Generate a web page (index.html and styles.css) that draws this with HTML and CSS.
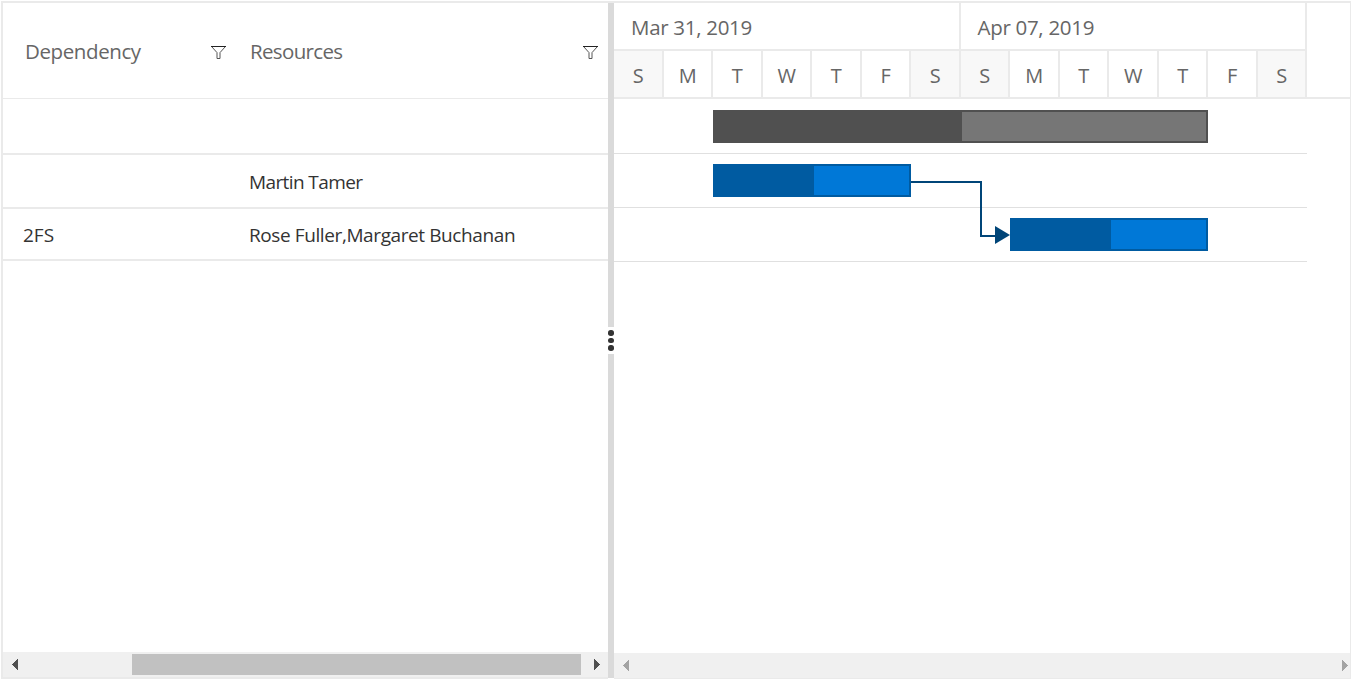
FILE: index.html
```html
<!DOCTYPE html>
<html lang="en">
<head>
<meta charset="utf-8">
<title>Gantt</title>
<link rel="stylesheet" href="styles.css">
</head>
<body>
<div class="gantt">
  <section class="pane grid-pane">
    <div class="grid-head">
      <div class="head-cell dep"><span class="t-dep">Dependency</span>
        <svg class="filter" viewBox="0 0 15 13"><path d="M.8 .8L6 6.6V12.5H9V6.6L14.2 .8"/><path class="top" d="M0 .5h15"/></svg>
      </div>
      <div class="head-cell res"><span class="t-res">Resources</span>
        <svg class="filter" viewBox="0 0 15 13"><path d="M.8 .8L6 6.6V12.5H9V6.6L14.2 .8"/><path class="top" d="M0 .5h15"/></svg>
      </div>
    </div>
    <div class="grid-row first"><span class="cell-dep"></span><span></span></div>
    <div class="grid-row second"><span class="cell-dep"></span><span class="t-martin">Martin Tamer</span></div>
    <div class="grid-row third"><span class="cell-dep">2FS</span><span class="t-rose">Rose Fuller,Margaret Buchanan</span></div>
    <div class="scrollbar grid-scroll">
      <svg class="arrow" viewBox="0 0 6 11"><path d="M6 0v11L0 5.5z"/></svg>
      <div class="thumb"></div>
      <svg class="arrow" viewBox="0 0 6 11"><path d="M0 0v11l6-5.5z"/></svg>
    </div>
  </section>
  <div class="splitter">
    <div class="handle"><i></i><i></i><i></i></div>
  </div>
  <section class="pane chart-pane">
    <div class="timeline">
      <div class="weeks"><div class="week">Mar 31, 2019</div><div class="week">Apr 07, 2019</div></div>
      <div class="days">
        <div class="day off">S</div><div class="day">M</div><div class="day">T</div><div class="day">W</div><div class="day">T</div><div class="day">F</div><div class="day off">S</div>
        <div class="day off">S</div><div class="day">M</div><div class="day">T</div><div class="day">W</div><div class="day">T</div><div class="day">F</div><div class="day off">S</div>
      </div>
    </div>
    <div class="chart">
      <div class="chart-row parent-row"><div class="bar parent"><div class="done"></div></div></div>
      <div class="chart-row"><div class="bar task"><div class="done"></div></div></div>
      <div class="chart-row"><div class="bar task late"><div class="done"></div></div></div>
      <svg class="link" viewBox="0 0 99 64"><path class="wire" d="M0 2H70V56H85"/><path class="tip" d="M84 46L99 55L84 64z"/></svg>
    </div>
    <div class="scrollbar chart-scroll">
      <svg class="arrow" viewBox="0 0 6 11"><path d="M6 0v11L0 5.5z"/></svg>
      <svg class="arrow" viewBox="0 0 6 11"><path d="M0 0v11l6-5.5z"/></svg>
    </div>
  </section>
</div>
</body>
</html>
```
FILE: styles.css
```css
* { box-sizing: border-box; }
body { margin: 0; background: #fff; font-family: "Open Sans", "Noto Sans", sans-serif; overflow: hidden; }
.gantt {
  display: flex;
  width: 1350px;
  height: 678px;
  margin: 1px 0 0 1px;
  border: solid #eaeaea;
  border-width: 2px 1px 0 2px;
}
.pane { display: flex; flex-direction: column; height: 676px; }

.grid-pane { width: 605px; border-bottom: 2px solid #eaeaea; }
.grid-head { display: flex; height: 96px; border-bottom: 1px solid #eaeaea; color: #666; font-size: 20.5px; }
.head-cell { display: flex; align-items: center; justify-content: space-between; white-space: nowrap; }
.head-cell span { line-height: 28px; }
.dep { width: 225px; padding-left: 22px; }
.res { width: 380px; padding-left: 22px; }
.t-dep { letter-spacing: -.4px; }
.t-res { letter-spacing: -.65px; }
.filter { width: 15px; height: 13px; margin-top: 4px; margin-right: 2px; fill: none; stroke: #555; stroke-width: 1; }
.res .filter { margin-right: 10px; }
.filter .top { stroke: #222; }
.grid-row { display: flex; align-items: center; padding-top: 2px; border-bottom: 2px solid #eaeaea; color: #333; font-size: 19px; white-space: nowrap; }
.first { height: 56px; }
.second { height: 54px; }
.third { height: 52px; }
.cell-dep { width: 246px; padding-left: 20px; }
.t-martin { letter-spacing: -.6px; }
.t-rose { letter-spacing: -.4px; }

.scrollbar { display: flex; align-items: center; height: 25px; margin-top: auto; background: #f0f0f0; flex: none; }
.arrow { width: 6px; height: 11px; fill: #505050; shape-rendering: crispEdges; }
.grid-scroll { padding: 0 8px 0 9px; }
.thumb { width: 449px; height: 21px; margin: 0 13px 0 114px; background: #c1c1c1; }
.chart-scroll { justify-content: space-between; padding: 0 2px 0 9px; }
.chart-scroll .arrow { fill: #a3a3a3; }

.splitter { display: flex; align-items: center; width: 6px; height: 675px; background: #dadada; }
.handle { display: flex; flex-direction: column; align-items: center; justify-content: center; gap: 2.2px; width: 6px; height: 27px; background: #fff; }
.handle i { width: 5.4px; height: 5.4px; border-radius: 50%; background: #333; }

.chart-pane { width: 736px; border-bottom: 1px solid #eaeaea; }
.timeline { height: 96px; border-bottom: 2px solid #eaeaea; color: #666; font-size: 20.5px; }
.weeks { display: flex; height: 48px; width: 693px; }
.week { width: 346.5px; padding-left: 17px; border: solid #eaeaea; border-width: 0 2px 2px 0; line-height: 49px; letter-spacing: -.3px; white-space: nowrap; }
.days { display: grid; grid-template-columns: repeat(14, 49.5px); grid-template-rows: 46px; height: 46px; }
.day { padding-left: 1px; border-right: 2px solid #eaeaea; text-align: center; font-size: 20px; line-height: 49px; }
.off { background: #f8f8f8; }

.chart { position: relative; width: 693px; }
.chart-row { display: flex; height: 54px; padding: 10px 0 0 99px; border-bottom: 1px solid #e0e0e0; }
.parent-row { height: 55px; padding-top: 11px; }
.bar { width: 198px; height: 33px; border: 2px solid #005ba1; background: #0078d7; }
.done { width: 99px; height: 100%; background: #005ba1; }
.parent { width: 495px; border-color: #505050; background: #767676; }
.parent .done { width: 247px; background: #505050; }
.late { margin-left: 297px; }
.link { position: absolute; left: 297px; top: 81px; width: 99px; height: 64px; }
.wire { fill: none; stroke: #004578; stroke-width: 2; }
.tip { fill: #004578; }
```
